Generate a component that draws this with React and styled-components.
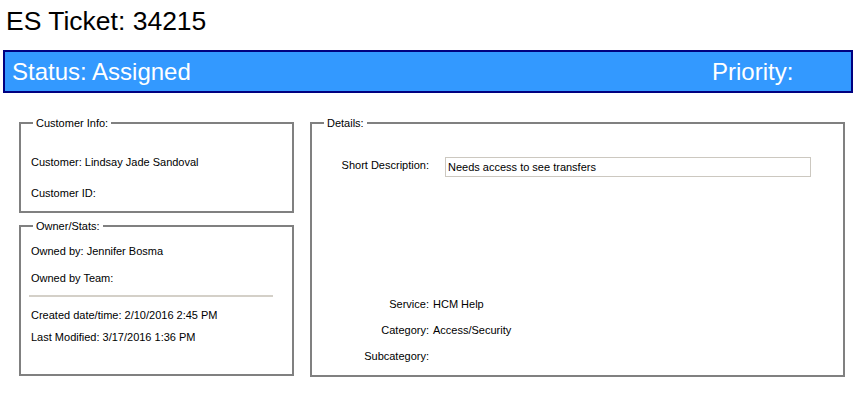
import React from 'react';
import styled, { createGlobalStyle } from 'styled-components';

const GlobalStyle = createGlobalStyle`
  body {
    margin: 0;
    background: #ffffff;
    font-family: "Liberation Sans", Arial, sans-serif;
    color: #000000;
  }
`;

const ticket = {
  id: 34215,
  status: 'Assigned',
  customer: 'Lindsay Jade Sandoval',
  owner: 'Jennifer Bosma',
  created: '2/10/2016 2:45 PM',
  modified: '3/17/2016 1:36 PM',
  shortDescription: 'Needs access to see transfers',
  service: 'HCM Help',
  category: 'Access/Security',
};

export default function App() {
  return (
    <Page>
      <GlobalStyle />
      <Title>ES Ticket: {ticket.id}</Title>
      <StatusBar>
        <BarText>Status: {ticket.status}</BarText>
        <PrioritySlot>
          <BarText>Priority:</BarText>
        </PrioritySlot>
      </StatusBar>

      <Content>
        <LeftColumn>
          <GroupBox height={96}>
            <Legend>Customer Info:</Legend>
            <BoxBody top={26} gap={17}>
              <Line>Customer: {ticket.customer}</Line>
              <Line>Customer ID:</Line>
            </BoxBody>
          </GroupBox>

          <GroupBox height={156}>
            <Legend>Owner/Stats:</Legend>
            <BoxBody top={12}>
              <Line>Owned by: {ticket.owner}</Line>
              <Line spaced={13}>Owned by Team:</Line>
              <Separator />
              <Line spaced={11}>Created date/time: {ticket.created}</Line>
              <Line spaced={8}>Last Modified: {ticket.modified}</Line>
            </BoxBody>
          </GroupBox>
        </LeftColumn>

        <GroupBox height={260} width={535}>
          <Legend>Details:</Legend>
          <DetailsBody>
            <DescRow>
              <Label>Short Description:</Label>
              <TextBox readOnly value={ticket.shortDescription} />
            </DescRow>
            <InfoList>
              <InfoRow>
                <Label>Service:</Label>
                <Value>{ticket.service}</Value>
              </InfoRow>
              <InfoRow>
                <Label>Category:</Label>
                <Value>{ticket.category}</Value>
              </InfoRow>
              <InfoRow>
                <Label>Subcategory:</Label>
                <Value />
              </InfoRow>
            </InfoList>
          </DetailsBody>
        </GroupBox>
      </Content>
    </Page>
  );
}

const Page = styled.div`
  padding: 6px 0 0 3px;
  width: 866px;
  height: 404px;
  box-sizing: border-box;
`;

const Title = styled.h1`
  margin: 0 0 0 3px;
  font-size: 26.5px;
  font-weight: normal;
  line-height: 30px;
  height: 30px;
`;

const StatusBar = styled.div`
  margin-top: 14px;
  width: 850px;
  height: 43px;
  box-sizing: border-box;
  border: 2px solid #000080;
  background: #3399ff;
  display: flex;
  align-items: center;
  padding-left: 7px;
`;

const BarText = styled.span`
  color: #ffffff;
  font-size: 24px;
  line-height: 28px;
`;

const PrioritySlot = styled.div`
  margin-left: auto;
  width: 139px;
`;

const Content = styled.div`
  display: flex;
  gap: 16px;
  margin-top: 24px;
  padding-left: 16px;
`;

const LeftColumn = styled.div`
  display: flex;
  flex-direction: column;
  gap: 7px;
  width: 275px;
`;

const GroupBox = styled.fieldset`
  margin: 0;
  padding: 0;
  min-width: 0;
  box-sizing: border-box;
  border: 2px solid #808080;
  width: ${(p) => (p.width ? `${p.width}px` : '100%')};
  height: ${(p) => p.height}px;
`;

const Legend = styled.legend`
  margin-left: 12px;
  padding: 0 3px;
  font-size: 11px;
  line-height: 12px;
`;

const BoxBody = styled.div`
  display: flex;
  flex-direction: column;
  gap: ${(p) => p.gap || 0}px;
  padding: ${(p) => p.top}px 0 0 10px;
`;

const Line = styled.div`
  font-size: 11px;
  line-height: 14px;
  height: 14px;
  white-space: nowrap;
  margin-top: ${(p) => p.spaced || 0}px;
`;

const Separator = styled.div`
  margin: 10px 0 0 -2px;
  width: 244px;
  height: 2px;
  background: #d4d0c8;
`;

const DetailsBody = styled.div`
  padding: 28px 0 0 24px;
`;

const DescRow = styled.div`
  display: grid;
  grid-template-columns: 93px 366px;
  column-gap: 16px;
  align-items: start;
`;

const Label = styled.div`
  font-size: 11px;
  line-height: 14px;
  text-align: right;
  white-space: nowrap;
  margin-top: 1px;
`;

const TextBox = styled.input`
  width: 366px;
  height: 20px;
  box-sizing: border-box;
  margin: 0;
  padding: 0 2px;
  border: 1px solid #ccc8c0;
  background: #ffffff;
  font-family: "Liberation Sans", Arial, sans-serif;
  font-size: 11px;
  color: #000000;
  outline: none;
`;

const InfoList = styled.div`
  margin-top: 120px;
  display: flex;
  flex-direction: column;
  gap: 12px;
`;

const InfoRow = styled.div`
  display: grid;
  grid-template-columns: 93px 1fr;
  column-gap: 4px;
  height: 14px;

  & > ${Label} {
    margin-top: 0;
  }
`;

const Value = styled.div`
  font-size: 11px;
  line-height: 14px;
  white-space: nowrap;
`;
